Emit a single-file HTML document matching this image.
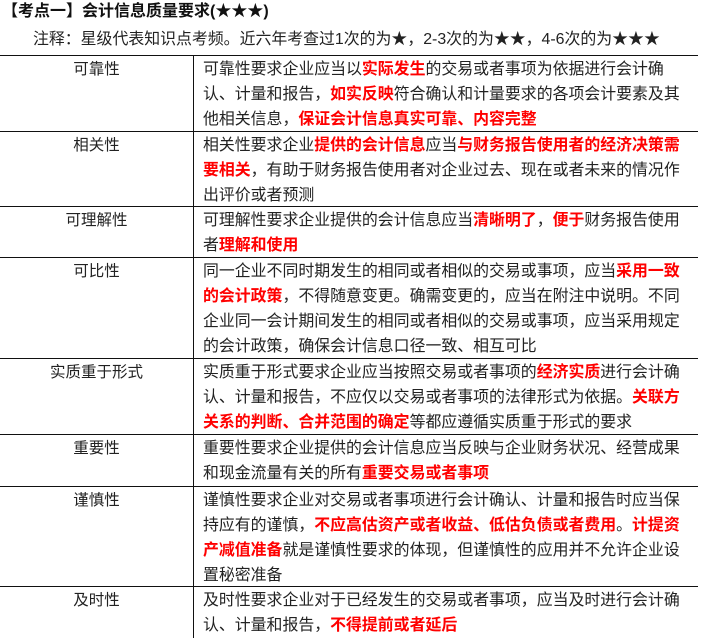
<!DOCTYPE html>
<html><head><meta charset="utf-8"><style>
body{margin:0;width:714px;height:638px;background:#fff;overflow:hidden;font-family:"Liberation Sans","Noto Sans CJK SC",sans-serif;color:#222;position:relative}
.t{position:absolute;left:2px;top:-3px;font-size:16px;font-weight:bold;color:#111}
.n{position:absolute;left:33px;top:26px;font-size:15.9px;color:#222}
.row{position:absolute;left:0;width:698px;border-top:1.5px solid #111;box-sizing:border-box}
.l{position:absolute;left:0;width:193px;text-align:center;top:1px;font-size:15.5px;line-height:25px}
.r{position:absolute;left:203px;top:1px;font-size:15.9px;line-height:25px;white-space:nowrap}
.v{position:absolute;left:193px;top:55px;height:583px;border-left:1.5px solid #111}
b{color:#f00}
</style></head><body>
<div class="t">【考点一】会计信息质量要求(★★★)</div>
<div class="n">注释：星级代表知识点考频。近六年考查过1次的为★，2-3次的为★★，4-6次的为★★★</div>
<div class="row" style="top:55px;height:76px"><div class="l">可靠性</div><div class="r">可靠性要求企业应当以<b>实际发生</b>的交易或者事项为依据进行会计确<br>认、计量和报告，<b>如实反映</b>符合确认和计量要求的各项会计要素及其<br>他相关信息，<b>保证会计信息真实可靠、内容完整</b></div></div>
<div class="row" style="top:131px;height:75px"><div class="l">相关性</div><div class="r">相关性要求企业<b>提供的会计信息</b>应当<b>与财务报告使用者的经济决策需<br>要相关</b>，有助于财务报告使用者对企业过去、现在或者未来的情况作<br>出评价或者预测</div></div>
<div class="row" style="top:206px;height:51px"><div class="l">可理解性</div><div class="r">可理解性要求企业提供的会计信息应当<b>清晰明了</b>，<b>便于</b>财务报告使用<br>者<b>理解和使用</b></div></div>
<div class="row" style="top:257px;height:101px"><div class="l">可比性</div><div class="r">同一企业不同时期发生的相同或者相似的交易或事项，应当<b>采用一致<br>的会计政策</b>，不得随意变更。确需变更的，应当在附注中说明。不同<br>企业同一会计期间发生的相同或者相似的交易或事项，应当采用规定<br>的会计政策，确保会计信息口径一致、相互可比</div></div>
<div class="row" style="top:358px;height:76px"><div class="l">实质重于形式</div><div class="r">实质重于形式要求企业应当按照交易或者事项的<b>经济实质</b>进行会计确<br>认、计量和报告，不应仅以交易或者事项的法律形式为依据。<b>关联方<br>关系的判断、合并范围的确定</b>等都应遵循实质重于形式的要求</div></div>
<div class="row" style="top:434px;height:52px"><div class="l">重要性</div><div class="r">重要性要求企业提供的会计信息应当反映与企业财务状况、经营成果<br>和现金流量有关的所有<b>重要交易或者事项</b></div></div>
<div class="row" style="top:486px;height:100px"><div class="l">谨慎性</div><div class="r">谨慎性要求企业对交易或者事项进行会计确认、计量和报告时应当保<br>持应有的谨慎，<b>不应高估资产或者收益、低估负债或者费用</b>。<b>计提资<br>产减值准备</b>就是谨慎性要求的体现，但谨慎性的应用并不允许企业设<br>置秘密准备</div></div>
<div class="row" style="top:586px;height:52px"><div class="l">及时性</div><div class="r">及时性要求企业对于已经发生的交易或者事项，应当及时进行会计确<br>认、计量和报告，<b>不得提前或者延后</b></div></div>
<div class="v"></div>
</body></html>
